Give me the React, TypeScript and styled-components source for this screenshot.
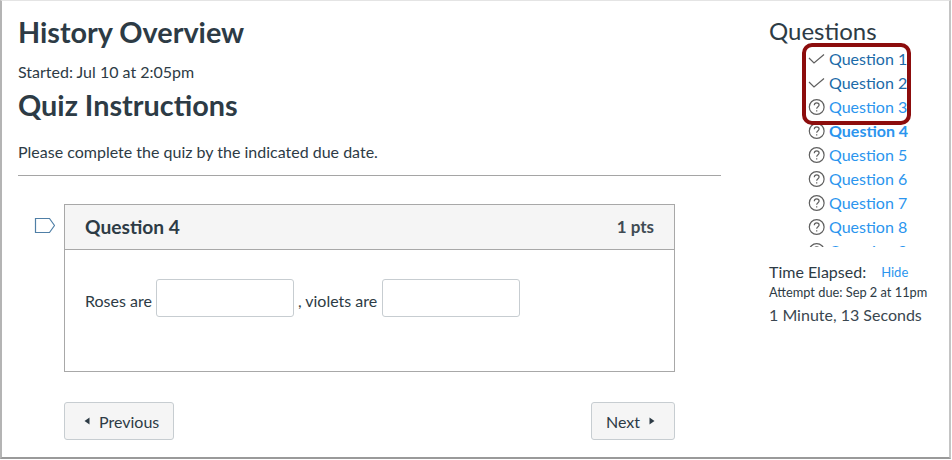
import React from 'react';
import styled, { createGlobalStyle } from 'styled-components';

const GlobalStyle = createGlobalStyle`
html, body {
    margin:0;
    padding:0;
    background:#fff;
}
body {
    font-family:Lato, "Open Sans", sans-serif;
    color:#2D3B45;
    text-rendering:optimizeLegibility;
    font-variant-ligatures:common-ligatures;
}
`

const Frame = styled.div`
box-sizing:border-box;
width:951px;
height:459px;
display:flex;
background:#fff;
border-top:1px solid #e4e4e4;
border-left:2px solid #b4b4b4;
border-right:2px solid #c4c4c4;
border-bottom:2px solid #9a9a9a;
overflow:hidden;
`
const Main = styled.main`
width:703px;
margin-left:16px;
flex-shrink:0;
`
const Title = styled.h1`
margin:14px 0 0 0;
font-size:28.8px;
line-height:34px;
font-weight:700;
`
const Started = styled.p`
margin:13px 0 0 0;
font-size:16px;
line-height:20px;
`
const Subtitle = styled.h2`
margin:6px 0 0 0;
font-size:28.8px;
line-height:34px;
font-weight:700;
`
const Instructions = styled.p`
margin:20px 0 0 0;
font-size:16px;
line-height:20px;
padding-bottom:13px;
border-bottom:1px solid #a5a5a5;
`
const QuestionRow = styled.div`
display:flex;
align-items:flex-start;
margin-top:28px;
margin-left:16px;
`
const Flag = styled.svg`
width:21px;
height:17px;
margin:13px 9px 0 0;
flex-shrink:0;
`
const QuestionCard = styled.section`
box-sizing:border-box;
width:611px;
height:168px;
border:1px solid #a8a8a8;
`
const CardHeader = styled.header`
box-sizing:border-box;
height:45px;
padding:0 20px 2px 20px;
display:flex;
align-items:center;
justify-content:space-between;
background:#f5f5f5;
border-bottom:1px solid #a8a8a8;
font-size:19.2px;
font-weight:700;
`
const Points = styled.span`
font-size:17px;
color:#3f4b54;
`
const CardBody = styled.div`
display:flex;
align-items:center;
gap:4px;
padding:29px 20px 0 20px;
font-size:16px;
`
const BlankLabel = styled.span`
padding-top:5px;
`
const BlankInput = styled.input`
box-sizing:border-box;
width:138px;
height:38px;
padding:0;
background:#fff;
border:1px solid #c7cdd1;
border-radius:3px;
&:last-child {
    margin-left:1px;
}
`
const Footer = styled.div`
display:flex;
justify-content:space-between;
width:611px;
margin:30px 0 0 46px;
`
const NavButton = styled.button<{ $caretEnd?: boolean }>`
box-sizing:border-box;
height:38px;
display:flex;
align-items:center;
gap:9px;
padding:${p => (p.$caretEnd ? '0 19px 0 14px' : '0 14px 0 19px')};
background:#f5f5f5;
border:1px solid #c7cdd1;
border-radius:3px;
color:#2D3B45;
font-family:inherit;
font-size:16px;
`
const Caret = styled.svg`
width:6px;
height:8px;
fill:#2D3B45;
`
const Sidebar = styled.aside`
position:relative;
margin-left:48px;
flex:1;
`
const SideTitle = styled.h2`
margin:15px 0 0 0;
font-size:24px;
line-height:29px;
font-weight:400;
`
const QuestionList = styled.ul`
list-style:none;
margin:2px 0 0 0;
padding:0 0 0 38px;
height:200px;
overflow:hidden;
`
const QuestionItem = styled.li`
height:24px;
display:flex;
align-items:center;
gap:4px;
`
const StatusIcon = styled.svg`
width:18px;
height:18px;
flex-shrink:0;
fill:none;
stroke:#5f5f5f;
stroke-width:1.2;
`
const QuestionLink = styled.a<{ $answered?: boolean; $current?: boolean }>`
font-size:16px;
line-height:24px;
white-space:nowrap;
color:${p => (p.$answered ? '#1b6aa8' : '#2b95ee')};
font-weight:${p => (p.$current ? 700 : 400)};
`
const Highlight = styled.div`
position:absolute;
left:33px;
top:42px;
width:109px;
height:82px;
box-sizing:border-box;
border:4px solid #8c0d0d;
border-radius:10px;
`
const TimeRow = styled.div`
display:flex;
align-items:center;
gap:15px;
margin-top:15px;
font-size:16px;
line-height:20px;
`
const HideLink = styled.a`
font-size:13px;
color:#2b95ee;
`
const Due = styled.p`
margin:2px 0 0 0;
font-size:12.8px;
line-height:16px;
`
const Elapsed = styled.p`
margin:5px 0 0 0;
font-size:16px;
line-height:20px;
color:#3a4750;
`

const questions = [
    { n: 1, answered: true },
    { n: 2, answered: true },
    { n: 3 },
    { n: 4, current: true },
    { n: 5 },
    { n: 6 },
    { n: 7 },
    { n: 8 },
    { n: 9 },
];

function CheckMark() {
    return (
        <StatusIcon viewBox="0 0 18 18">
            <path d="M2 8 L7 13 L17 4.5" />
        </StatusIcon>
    )
}

function QuestionMark() {
    return (
        <StatusIcon viewBox="0 0 18 18">
            <circle cx="9.7" cy="9" r="7.4" />
            <path d="M7.3 7.2 C7.3 5.7 8.4 4.9 9.7 4.9 C11.1 4.9 12.1 5.8 12.1 7 C12.1 8.6 9.7 8.8 9.7 10.8" />
            <path d="M9.7 12.3 V13.5" />
        </StatusIcon>
    )
}

export default function App() {
    return (
        <>
            <GlobalStyle />
            <Frame>
                <Main>
                    <Title>History Overview</Title>
                    <Started>Started: Jul 10 at 2:05pm</Started>
                    <Subtitle>Quiz Instructions</Subtitle>
                    <Instructions>Please complete the quiz by the indicated due date.</Instructions>
                    <QuestionRow>
                        <Flag viewBox="0 0 21 17">
                            <path d="M1.5 1.5 H15.5 L20.5 8.5 L15.5 15.5 H1.5 Z" fill="none" stroke="#4f7fa6" strokeWidth="1.2" />
                        </Flag>
                        <QuestionCard>
                            <CardHeader>
                                <span>Question 4</span>
                                <Points>1 pts</Points>
                            </CardHeader>
                            <CardBody>
                                <BlankLabel>Roses are</BlankLabel>
                                <BlankInput type="text" />
                                <BlankLabel>, violets are</BlankLabel>
                                <BlankInput type="text" />
                            </CardBody>
                        </QuestionCard>
                    </QuestionRow>
                    <Footer>
                        <NavButton>
                            <Caret viewBox="0 0 6 8"><path d="M5.5 0.5 V7.5 L0.5 4 Z" /></Caret>
                            Previous
                        </NavButton>
                        <NavButton $caretEnd>
                            Next
                            <Caret viewBox="0 0 6 8"><path d="M0.5 0.5 V7.5 L5.5 4 Z" /></Caret>
                        </NavButton>
                    </Footer>
                </Main>
                <Sidebar>
                    <SideTitle>Questions</SideTitle>
                    <QuestionList>
                        {questions.map(q => (
                            <QuestionItem key={q.n}>
                                {q.answered ? <CheckMark /> : <QuestionMark />}
                                <QuestionLink $answered={q.answered} $current={q.current}>Question {q.n}</QuestionLink>
                            </QuestionItem>
                        ))}
                    </QuestionList>
                    <Highlight />
                    <TimeRow>
                        <span>Time Elapsed:</span>
                        <HideLink>Hide</HideLink>
                    </TimeRow>
                    <Due>Attempt due: Sep 2 at 11pm</Due>
                    <Elapsed>1 Minute, 13 Seconds</Elapsed>
                </Sidebar>
            </Frame>
        </>
    )
}
